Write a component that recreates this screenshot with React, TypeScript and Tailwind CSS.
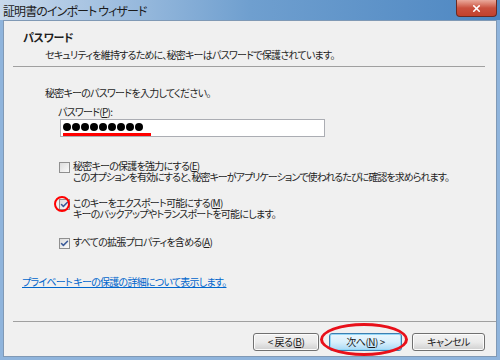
import { Check, X } from 'lucide-react';

const jp = "font-['Meiryo_UI','Noto_Sans_CJK_JP',sans-serif] [font-feature-settings:'palt']";

function CheckBox({ checked }: { checked: boolean }) {
  return (
    <span className="mt-[2px] flex h-[11px] w-[11px] shrink-0 items-center justify-center border border-[#8f8f8f] bg-gradient-to-br from-[#dcdcdc] to-[#fbfbfb]">
      {checked && <Check size={9} strokeWidth={4} className="text-[#3b5a99]" />}
    </span>
  );
}

function Btn({ children, focused, w }: { children: React.ReactNode; focused?: boolean; w: string }) {
  return (
    <button
      className={`${w} h-[18px] rounded-[3px] border text-[10px] leading-none tracking-[-0.5px] text-[#1a1a1a] ${
        focused
          ? 'border-[#3c7fb1] bg-gradient-to-b from-[#eaf6fd] via-[#d9f0fc] to-[#a7d9f5] shadow-[inset_0_0_0_1px_#94d7f7]'
          : 'border-[#707070] bg-gradient-to-b from-[#f2f2f2] via-[#ebebeb] to-[#cfcfcf] shadow-[inset_0_0_0_1px_#fcfcfc]'
      }`}
    >
      {children}
    </button>
  );
}

const dots = Array.from({ length: 9 });

export default function App() {
  return (
    <div className={`flex h-[360px] w-[500px] flex-col bg-[#8fb4dc] text-[10px] leading-[11px] tracking-[-0.75px] text-[#1e1e1e] ${jp}`}>
      {/* title bar */}
      <div className="flex h-[20px] shrink-0 items-start bg-gradient-to-r from-[#c8d9ec] via-[#6f9fcf] to-[#4d87c2]">
        <span className="pl-[3px] pt-[4px] text-[12px] leading-[13px] tracking-[-0.9px] text-[#1b1b1b]">証明書のインポート ウィザード</span>
        <div className="ml-auto mr-[3px] flex h-[17px] w-[41px] items-center justify-center rounded-b-[4px] border border-t-0 border-[#6b2a22] bg-gradient-to-b from-[#e9a99c] via-[#c9503e] to-[#c2412c]">
          <X size={11} strokeWidth={3.5} className="text-white" />
        </div>
      </div>

      {/* body */}
      <div className="mx-[3px] mb-[3px] flex flex-1 flex-col border border-[#8099b5] bg-[#f0f0f0]">
        <div className="pl-[19px] pt-[10px] text-[11px] font-bold leading-[12px] tracking-[-0.3px]">パスワード</div>
        <div className="mt-[6px] pl-[41px]">セキュリティを維持するために、秘密キーはパスワードで保護されています。</div>
        <div className="ml-[9px] mr-[11px] mt-[6px] h-[2px] border-t border-[#a0a0a0] border-b-white" />

        <div className="mt-[19px] pl-[41px]">秘密キーのパスワードを入力してください。</div>
        <div className="mt-[8px] pl-[54px]">
          パスワード(<span className="underline">P</span>):
        </div>
        <div className="relative ml-[56px] mt-[2px] flex h-[18px] w-[265px] items-start gap-[1px] border border-[#abadb3] bg-white pl-[2px] pt-[3px]">
          {dots.map((_, i) => (
            <span key={i} className="h-[8px] w-[8px] rounded-full bg-black" />
          ))}
          <span className="absolute left-[2px] top-[13px] h-[3px] w-[88px] bg-[#ff0000]" />
        </div>

        <div className="mt-[23px] flex gap-[3px] pl-[55px]">
          <CheckBox checked={false} />
          <div>
            <div>秘密キーの保護を強力にする(<span className="underline">E</span>)</div>
            <div className="tracking-[-0.95px]">このオプションを有効にすると、秘密キーがアプリケーションで使われるたびに確認を求められます。</div>
          </div>
        </div>

        <div className="mt-[15px] flex gap-[3px] pl-[55px]">
          <div className="relative">
            <CheckBox checked={true} />
            <span className="absolute left-[-5px] top-[-1px] h-[16px] w-[16px] rounded-full border-[2.5px] border-[#ff0000]" />
          </div>
          <div>
            <div>このキーをエクスポート可能にする(<span className="underline">M</span>)</div>
            <div>キーのバックアップやトランスポートを可能にします。</div>
          </div>
        </div>

        <div className="mt-[17px] flex gap-[3px] pl-[55px]">
          <CheckBox checked={true} />
          <div>すべての拡張プロパティを含める(<span className="underline">A</span>)</div>
        </div>

        <div className="mt-[27px] pl-[18px]">
          <span className="text-[#0066cc] underline">プライベート キーの保護の詳細について表示します。</span>
        </div>

        <div className="ml-[9px] mt-auto h-[2px] border-t border-[#a0a0a0] border-b-white" />
        <div className="flex items-start justify-end gap-[10px] pb-[5px] pr-[11px] pt-[10px]">
          <Btn w="w-[66px]">&lt; 戻る(<span className="underline">B</span>)</Btn>
          <div className="relative">
            <Btn w="w-[73px]" focused>
              次へ(<span className="underline">N</span>) &gt;
            </Btn>
            <span className="absolute left-[-9px] top-[-10px] h-[33px] w-[88px] rounded-[50%] border-[3px] border-[#e8101a]" />
          </div>
          <Btn w="w-[73px]">キャンセル</Btn>
        </div>
      </div>
    </div>
  );
}
